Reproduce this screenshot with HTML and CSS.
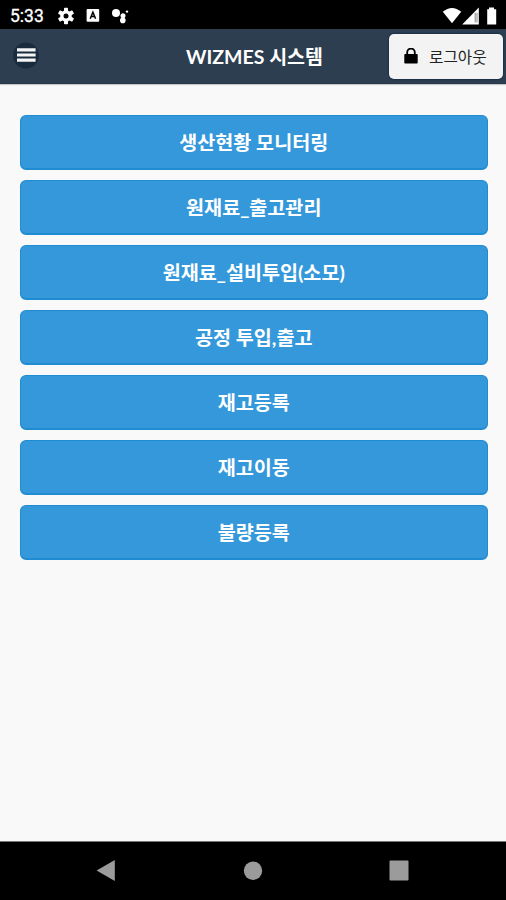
FILE: index.html
```html
<!DOCTYPE html>
<html lang="ko">
<head>
    <meta charset="UTF-8">
    <meta name="viewport" content="width=device-width, initial-scale=1">
    <title>WIZMES 시스템</title>
    <link rel="stylesheet" href="styles.css">
</head>
<body>
    <div class="status-bar">
        <span class="clock">5:33</span>
        <svg class="status-left" width="76" height="18" viewBox="0 0 76 18">
            <g transform="translate(10 9)" fill="#fff">
                <circle r="5.8"/>
                <rect x="-2" y="-8.2" width="4" height="16.4" rx="0.8"/>
                <rect x="-2" y="-8.2" width="4" height="16.4" rx="0.8" transform="rotate(60)"/>
                <rect x="-2" y="-8.2" width="4" height="16.4" rx="0.8" transform="rotate(120)"/>
                <circle r="2.5" fill="#000"/>
            </g>
            <rect x="30.6" y="2" width="12.6" height="12.8" rx="1" fill="#fff"/>
            <path d="M34.2 11.8 36.9 5.2 39.6 11.8M35.2 9.6H38.6" fill="none" stroke="#000" stroke-width="1.5"/>
            <g fill="#fff">
                <circle cx="60" cy="6" r="4"/>
                <circle cx="67" cy="8.7" r="2.5"/>
                <circle cx="66.8" cy="13.4" r="2.8"/>
                <circle cx="71" cy="4.6" r="1.2"/>
            </g>
        </svg>
        <svg class="status-right" width="56" height="18" viewBox="0 0 56 18" fill="#fff">
            <path d="M0.8 4.8Q10 -2.8 19.2 4.8L10 16.2Z"/>
            <path d="M36.8 0.5V17.5H20.2Z"/>
            <path d="M33.2 5.8V15.5M35 5.8V15.5" stroke="#555" stroke-width="0.7"/>
            <path d="M47 2.2V0.5H52V2.2H54.2V17.5H45.2V2.2Z"/>
        </svg>
    </div>

    <div class="header">
        <button class="menu-button" aria-label="메뉴">
            <svg width="28" height="28" viewBox="0 0 28 28">
                <circle cx="14" cy="13.5" r="13" fill="#192b3e"/>
                <path d="M5 7.9H23.6M5 13H23.6M5 18.1H23.6" stroke="#f4f4f4" stroke-width="3.2"/>
            </svg>
        </button>
        <h1>WIZMES 시스템</h1>
        <button class="logout-button">
            <svg width="14" height="17" viewBox="0 0 14 17">
                <rect x="0.3" y="6" width="13.4" height="9.5" rx="0.8" fill="#000"/>
                <path d="M3.2 7V4.3A3.8 3.8 0 0 1 10.8 4.3V7" fill="none" stroke="#000" stroke-width="1.8"/>
            </svg>
            <span>로그아웃</span>
        </button>
    </div>

    <div class="content">
        <button class="menu-item">생산현황 모니터링</button>
        <button class="menu-item">원재료_출고관리</button>
        <button class="menu-item">원재료_설비투입(소모)</button>
        <button class="menu-item">공정 투입,출고</button>
        <button class="menu-item">재고등록</button>
        <button class="menu-item">재고이동</button>
        <button class="menu-item">불량등록</button>
    </div>

    <div class="nav-bar">
        <svg width="20" height="22" viewBox="0 0 20 22"><path d="M0.6 10.5 18.8 0.1V20.9Z" fill="#9b9b9b"/></svg>
        <svg width="20" height="22" viewBox="0 0 20 22"><circle cx="10" cy="10.7" r="9.2" fill="#9b9b9b"/></svg>
        <svg width="20" height="22" viewBox="0 0 20 22"><rect x="0.5" y="0.5" width="19" height="20" rx="1" fill="#9b9b9b"/></svg>
    </div>
</body>
</html>
```
FILE: styles.css
```css
* {
    box-sizing: border-box;
}
body {
    margin: 0;
    height: 100vh;
    display: flex;
    flex-direction: column;
    overflow: hidden;
    background: #f9f9f9;
    font-family: Lato, "Noto Sans CJK KR", sans-serif;
}
button {
    padding: 0;
    border: none;
    font-family: inherit;
    cursor: pointer;
}
svg {
    display: block;
    flex: none;
}
.status-bar {
    height: 29px;
    padding: 2px 8px 0 10px;
    display: flex;
    align-items: center;
    background: #000;
    color: #fff;
}
.clock {
    width: 46px;
    font-family: Roboto, sans-serif;
    font-size: 17.5px;
    line-height: 20px;
    -webkit-text-stroke: 0.3px #fff;
}
.status-right {
    margin-left: auto;
}
.header {
    height: 55px;
    padding: 0 3px 0 12px;
    display: grid;
    grid-template-columns: 114px 1fr 114px;
    align-items: center;
    background: #2c3e50;
    border-bottom: 1px solid #26384a;
    box-shadow: 0 1px 1px #c4c8cc;
}
.header h1 {
    margin: 0;
    padding: 2px 6px 0 0;
    color: #fff;
    font-size: 19.5px;
    font-weight: 700;
    line-height: 28px;
    text-align: center;
    white-space: nowrap;
}
.menu-button {
    width: 28px;
    height: 28px;
    background: none;
}
.logout-button {
    height: 45px;
    padding: 0 0 0 15px;
    display: flex;
    align-items: center;
    gap: 11px;
    background: #f3f3f3;
    border-radius: 5px;
    box-shadow: 0 0 1px 1px #1c3048;
    color: #222;
    font-size: 15.7px;
    white-space: nowrap;
}
.content {
    flex: 1;
    padding: 30.5px 18.5px 0 20px;
    display: flex;
    flex-direction: column;
    gap: 10.15px;
}
.menu-item {
    height: 55px;
    padding-top: 2px;
    background: #3498db;
    border: 1px solid #1f8bd0;
    border-bottom-width: 2px;
    border-radius: 6px;
    color: #fff;
    font-size: 19.6px;
    font-weight: 700;
    line-height: 28px;
}
.nav-bar {
    height: 59px;
    padding: 0 97px 0 96px;
    display: flex;
    align-items: center;
    justify-content: space-between;
    background: #000;
    border-top: 1px solid #777;
}
```
